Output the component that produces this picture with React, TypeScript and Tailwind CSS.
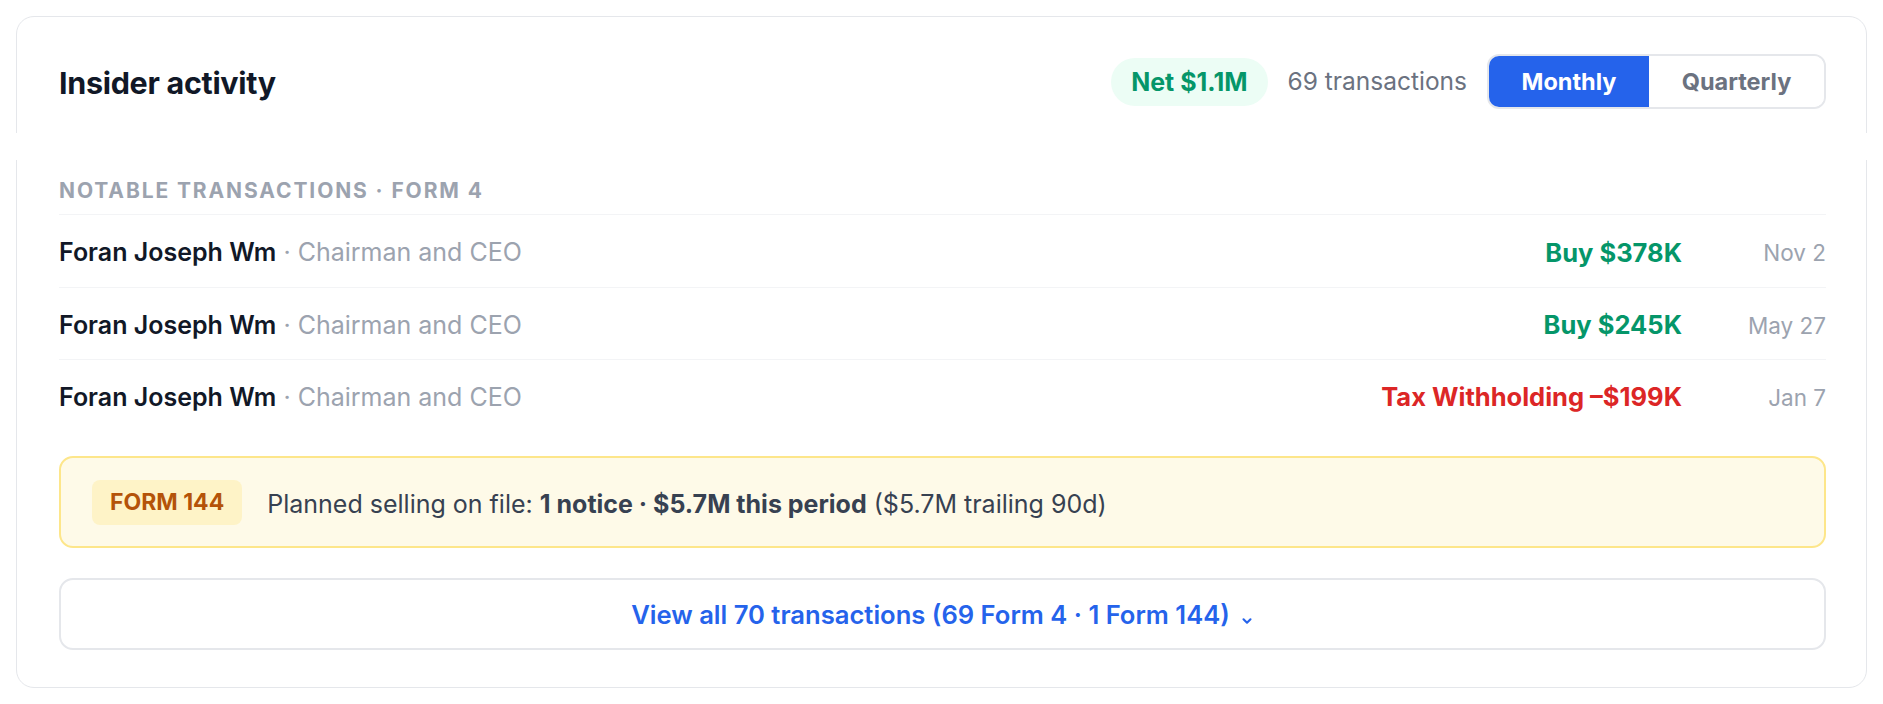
import React from "react";

const rows = [
  { name: "Foran Joseph Wm", role: "Chairman and CEO", label: "Buy $378K", tone: "buy", date: "Nov 2" },
  { name: "Foran Joseph Wm", role: "Chairman and CEO", label: "Buy $245K", tone: "buy", date: "May 27" },
  { name: "Foran Joseph Wm", role: "Chairman and CEO", label: "Tax Withholding \u2013$199K", tone: "sell", date: "Jan 7" },
];

const App = () => {
  return (
    <div className="min-h-screen bg-white p-4 font-['Inter','Liberation_Sans',sans-serif]">
      <section className="rounded-[18px] border border-[#e5e7eb] bg-white">
        {/* Header */}
        <div className="flex items-center justify-between pl-[42px] pr-[40px] pt-[37px] pb-[24px]">
          <h2 className="mt-[3px] text-[30.5px] font-bold leading-none tracking-[-0.01em] text-[#111827]">Insider activity</h2>
          <div className="flex items-center gap-[20px]">
            <span className="rounded-full bg-[#ecfdf5] px-[20px] py-[10px] text-[25px] leading-[28px] font-bold text-[#059669]">
              Net $1.1M
            </span>
            <span className="text-[24.5px] text-[#6b7280]">69 transactions</span>
            <div className="flex h-[55px] overflow-hidden rounded-[12px] border-2 border-[#e5e7eb]">
              <button className="w-[160px] bg-[#2563eb] text-[23.5px] font-bold text-white">Monthly</button>
              <button className="w-[175px] bg-white text-[23.5px] font-bold text-[#6b7280]">Quarterly</button>
            </div>
          </div>
        </div>

        {/* strip that covers the card border */}
        <div className="-mx-px h-[27px] bg-white" />

        {/* Body */}
        <div className="pl-[42px] pr-[40px] pb-[37px]">
          <div className="mt-[19px] border-b border-[#f3f4f6] pb-[11px] text-[21px] leading-[24px] font-bold tracking-[0.09em] text-[#9ca3af] uppercase">
            Notable transactions · Form 4
          </div>

          <div>
            {rows.map((r, i) => (
              <div
                key={i}
                className={`flex h-[72px] items-center pt-[4px] text-[25px] ${i > 0 ? "border-t border-[#f3f4f6]" : ""}`}
              >
                <div className="flex-1">
                  <span className="font-semibold text-[#111827]">{r.name}</span>
                  <span className="text-[#9ca3af]"> · {r.role}</span>
                </div>
                <span className={`text-[25.5px] font-bold ${r.tone === "buy" ? "text-[#059669]" : "text-[#dc2626]"}`}>{r.label}</span>
                <span className="w-[144px] text-right text-[22.5px] text-[#9ca3af]">{r.date}</span>
              </div>
            ))}
          </div>

          <div className="mt-[25px] flex h-[92px] items-center gap-[25px] rounded-[14px] border-2 border-[#fde68a] bg-[#fefae8] px-[31px]">
            <span className="rounded-[8px] bg-[#fef3c7] px-[18px] py-[9px] text-[23px] leading-[27px] font-bold text-[#b45309]">
              FORM 144
            </span>
            <p className="mt-[5px] text-[25px] text-[#374151]">
              Planned selling on file: <span className="font-bold">1 notice · $5.7M this period</span> ($5.7M trailing 90d)
            </p>
          </div>

          <button className="mt-[30px] flex h-[72px] w-full items-center justify-center gap-[10px] rounded-[14px] border-2 border-[#e5e7eb] bg-white pt-[3px] text-[25.6px] font-semibold text-[#2563eb]">
            View all 70 transactions (69 Form 4 · 1 Form 144)
            <svg width="14" height="14" viewBox="0 0 12 12" className="mt-[10px]" fill="none" stroke="currentColor" strokeWidth="1.8" strokeLinecap="round" strokeLinejoin="round">
              <path d="M3 4.5 6 7.5 9 4.5" />
            </svg>
          </button>
        </div>
      </section>
    </div>
  );
};

export default App;
